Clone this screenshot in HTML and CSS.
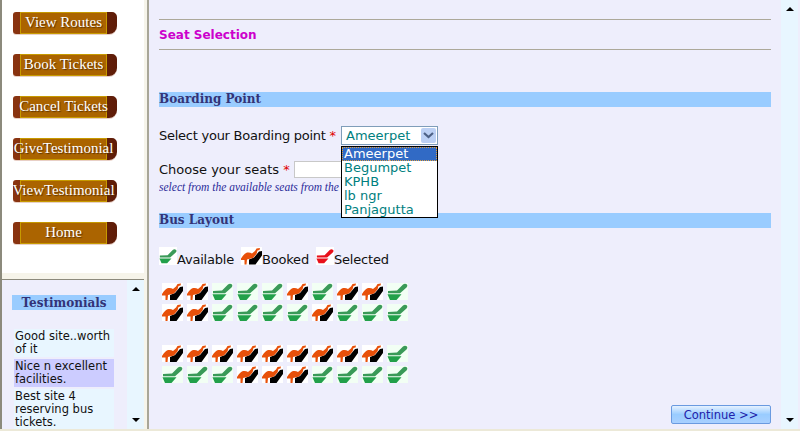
FILE: index.html
```html
<!DOCTYPE html>
<html lang="en">

<head>
    <meta charset="UTF-8">
    <title>Seat Selection</title>
    <link rel="stylesheet" href="styles.css">
</head>

<body>
    <svg class="defs" width="0" height="0">
        <symbol id="seat" viewBox="0 0 21 17">
            <path class="seat-back" d="M1 8 L10 7.500 L16 1.500 Q18 0 20 1.500 Q21 3 19.500 4.500 L13 10.300 H1 Z" />
            <path class="seat-base" d="M0.500 11.300 H14.500 L9.500 17 H3 Z" />
        </symbol>
        <symbol id="seat-booked" viewBox="0 0 21 17">
            <path fill="#000" d="M8 12 L13 10 L18 4 L21 3.500 V8 L14.500 17 H8 Z" />
            <path fill="#e8500a" d="M0 11 Q3 6 6 5 Q9 4.500 11 6 L14 3.500 L15.500 1 L19 0.500 L18.500 2.500 L16.500 3 L15.500 6.500 L12 10.500 L6 12 L5.500 17 H3.500 V12.500 H0 Z" />
        </symbol>
    </svg>

    <aside class="sidebar">
        <nav class="menu">
            <a class="menu-btn" href="#"><span>View Routes</span></a>
            <a class="menu-btn" href="#"><span>Book Tickets</span></a>
            <a class="menu-btn" href="#"><span>Cancel Tickets</span></a>
            <a class="menu-btn" href="#"><span>GiveTestimonial</span></a>
            <a class="menu-btn" href="#"><span>ViewTestimonial</span></a>
            <a class="menu-btn" href="#"><span>Home</span></a>
        </nav>
        <div class="testimonials">
            <div class="testimonials-body">
                <h3>Testimonials</h3>
                <p class="quote">Good site..worth of it</p>
                <p class="quote alt">Nice n excellent facilities.</p>
                <p class="quote">Best site 4 reserving bus tickets.</p>
            </div>
            <div class="scrollbar"><i class="arrow-up"></i><i class="arrow-down"></i></div>
        </div>
    </aside>

    <main class="main">
        <div class="content">
            <h1 class="title">Seat Selection</h1>

            <h2 class="section">Boarding Point</h2>
            <div class="field-row">
                <label class="label-boarding">Select your Boarding point <em>*</em></label>
                <div class="select-wrap">
                    <div class="select"><span>Ameerpet</span><b class="select-btn"><svg width="11" height="7" viewBox="0 0 11 7"><path d="M1 1 L5.500 5 L10 1" fill="none" stroke="#4d6185" stroke-width="2.200" /></svg></b></div>
                    <ul class="options">
                        <li class="on">Ameerpet</li>
                        <li>Begumpet</li>
                        <li>KPHB</li>
                        <li>lb ngr</li>
                        <li>Panjagutta</li>
                    </ul>
                </div>
            </div>
            <div class="field-row seats-row">
                <label class="label-seats">Choose your seats <em>*</em></label>
                <input type="text" class="seat-input">
            </div>
            <p class="hint">select from the available seats from the</p>

            <h2 class="section">Bus Layout</h2>
            <div class="legend">
                <svg class="legend-icon green"><use href="#seat" /></svg><span class="legend-free">Available</span>
                <svg class="legend-icon wide"><use href="#seat-booked" /></svg><span class="legend-booked">Booked</span>
                <svg class="legend-icon red"><use href="#seat" /></svg><span>Selected</span>
            </div>

            <div class="seats" id="seats-top"></div>
            <div class="seats lower" id="seats-bottom"></div>

            <div class="actions"><button type="button">Continue &gt;&gt;</button></div>
        </div>
        <div class="scrollbar"><i class="arrow-up"></i><i class="arrow-down"></i></div>
    </main>

    <script>
        // b = booked, a = available
        function drawSeats(id, layout) {
            const box = document.getElementById(id);
            let html = '';
            for (const ch of layout) {
                const ref = ch === 'b' ? '#seat-booked' : '#seat';
                html += '<svg class="seat ' + (ch === 'b' ? '' : 'green') + '"><use href="' + ref + '" /></svg>';
            }
            box.innerHTML = html;
        }
        drawSeats('seats-top', 'bbaaababba' + 'bbaaaabaaa');
        drawSeats('seats-bottom', 'bbbbbbbbba' + 'aaabbbaaaa');
    </script>
</body>

</html>
```

FILE: styles.css
```css
html, body {
    margin: 0;
    height: 431px;
    overflow: hidden;
}

body {
    display: flex;
    font-family: 'DejaVu Sans', sans-serif;
    font-size: 12px;
    background-color: #ece9d8;
}

.defs {
    position: absolute;
}

.sidebar {
    width: 149px;
    height: 429px;
    display: flex;
    flex-direction: column;
    flex-shrink: 0;
    border-left: 2px solid #8c8a7c;
    border-right: 2px solid #a8a698;
    padding-right: 3px;
    box-sizing: border-box;
    background-color: #f6f4ea;
}

.menu {
    height: 273px;
    background-color: #fff;
    padding-top: 12px;
    box-sizing: border-box;
    display: flex;
    flex-direction: column;
    gap: 20px;
    align-items: flex-start;
}

.menu-btn {
    display: flex;
    width: 104px;
    height: 22px;
    margin-left: 11px;
    box-sizing: border-box;
    padding: 0 10px 0 7px;
    background: linear-gradient(90deg, #8a3410, #5e1c08);
    border-radius: 3px 5px 8px 3px;
    box-shadow: 0 1px 0 #e8cfc6;
    color: #fff;
    font-family: 'Liberation Serif', serif;
    font-size: 15px;
    text-decoration: none;
    white-space: nowrap;
    text-shadow: 1px 1px 1px #5a3000;
}

.menu-btn span {
    flex: 1;
    min-width: 0;
    display: flex;
    justify-content: center;
    align-items: center;
    padding-bottom: 1px;
    background-color: #ab6400;
    border: 1px solid #c79a00;
}

.testimonials {
    flex: 1;
    display: flex;
    min-height: 0;
    margin-top: 6px;
    background-color: #eeeefc;
    border-top: 1px solid #8c8a7c;
    overflow: hidden;
}

.testimonials-body {
    flex: 1;
    padding: 15px 0 0 10px;
    overflow: hidden;
}

.testimonials-body h3 {
    width: 104px;
    margin: 0 0 19px;
    padding-top: 1px;
    background-color: #99ccff;
    color: #333377;
    font-family: 'DejaVu Serif', serif;
    font-size: 12px;
    line-height: 14px;
    text-align: center;
}

.quote {
    width: 99px;
    margin: 0 0 2px 2px;
    padding: 1px 0 1px 1px;
    background-color: #e8f6ff;
    color: #111;
    font-size: 11.500px;
    line-height: 13px;
}

.quote.alt {
    background-color: #ccccff;
}

.scrollbar {
    width: 17px;
    flex-shrink: 0;
    background-color: #e8f6ff;
    position: relative;
}

.arrow-up,
.arrow-down {
    position: absolute;
    left: 5px;
    width: 0;
    height: 0;
    border-left: 4px solid transparent;
    border-right: 4px solid transparent;
}

.arrow-up {
    top: 7px;
    border-bottom: 4px solid #000;
}

.arrow-down {
    bottom: 7px;
    border-top: 4px solid #000;
}

.main {
    flex: 1;
    height: 429px;
    display: flex;
    background-color: #eeeefc;
}

.main > .scrollbar {
    margin-right: 2px;
}

.content {
    flex: 1;
    padding: 19px 10px 0 10px;
    min-width: 0;
}

.title {
    margin: 0 0 42px;
    height: 28px;
    padding-top: 1px;
    box-sizing: content-box;
    border-top: 1px solid #aca899;
    border-bottom: 1px solid #aca899;
    color: #cc00cc;
    font-size: 12px;
    line-height: 29px;
}

.section {
    margin: 0;
    height: 15px;
    background-color: #99ccff;
    color: #333377;
    font-family: 'DejaVu Serif', serif;
    font-size: 12px;
    line-height: 15px;
}

.field-row {
    display: flex;
    align-items: center;
    margin-top: 19px;
    height: 19px;
    font-size: 13px;
    color: #111;
}

.field-row em {
    color: #e00000;
    font-style: normal;
}

.label-boarding {
    width: 182px;
    letter-spacing: -0.250px;
    white-space: nowrap;
}

.label-seats {
    width: 135px;
    white-space: nowrap;
}

.select-wrap {
    position: relative;
    width: 97px;
    height: 19px;
}

.select {
    display: flex;
    justify-content: space-between;
    height: 19px;
    box-sizing: border-box;
    border: 1px solid #7f9db9;
    background-color: #fff;
    color: #008080;
    padding-left: 4px;
    line-height: 17px;
}

.select-btn {
    width: 15px;
    height: 15px;
    margin: 1px;
    display: flex;
    align-items: center;
    justify-content: center;
    background-color: #bcd0f4;
    border-radius: 2px;
}

.options {
    position: absolute;
    top: 20px;
    left: 0;
    width: 97px;
    margin: 0;
    padding: 0;
    list-style: none;
    box-sizing: border-box;
    border: 1px solid #000;
    background-color: #fff;
    color: #008080;
    line-height: 14px;
    z-index: 2;
}

.options li {
    padding-left: 2px;
}

.options .on {
    background-color: #316ac5;
    color: #fff;
    outline: 1px dotted #e0a040;
    outline-offset: -1px;
}

.seats-row {
    margin-top: 16px;
    height: 17px;
}

.seat-input {
    width: 90px;
    height: 17px;
    box-sizing: border-box;
    border: 1px solid #c8c8c8;
    background-color: #fff;
    padding: 0;
}

.hint {
    width: 182px;
    margin: 2px 0 19px;
    overflow: hidden;
    white-space: nowrap;
    color: #2a2a99;
    font-family: 'Liberation Serif', serif;
    font-size: 11.500px;
    font-style: italic;
    line-height: 14px;
}

.legend {
    display: flex;
    align-items: flex-end;
    margin-top: 19px;
    font-size: 13px;
    height: 18px;
    color: #111;
}

.legend span {
    line-height: 14px;
    margin-bottom: -2px;
    letter-spacing: -0.200px;
}

.legend-free {
    width: 64px;
}

.legend-booked {
    width: 54px;
}

.legend-icon {
    width: 18px;
    height: 18px;
    background-color: #fff;
}

.legend-icon.wide {
    width: 21px;
}

.seat-back {
    fill: var(--seat-back, #3a9a58);
}

.seat-base {
    fill: var(--seat-base, #22a04a);
}

.red {
    --seat-back: #e8101a;
    --seat-base: #e8101a;
}

.seats {
    display: grid;
    grid-template-columns: repeat(10, 21px);
    column-gap: 4px;
    row-gap: 4px;
    margin: 18px 0 0 3px;
}

.seats.lower {
    margin-top: 24px;
}

.seat {
    width: 21px;
    height: 17px;
    background-color: #fff;
}

.seat.green {
    background-color: #f2fff4;
}

.actions {
    display: flex;
    justify-content: flex-end;
    margin-top: 22px;
}

.actions button {
    width: 100px;
    height: 19px;
    padding: 0;
    border: 1px solid #6a9ae0;
    border-radius: 2px;
    background: linear-gradient(#e6f2ff, #99ccff 50%, #a8d0ff);
    color: #2222aa;
    font-family: 'DejaVu Sans', sans-serif;
    font-size: 11.500px;
}
```
